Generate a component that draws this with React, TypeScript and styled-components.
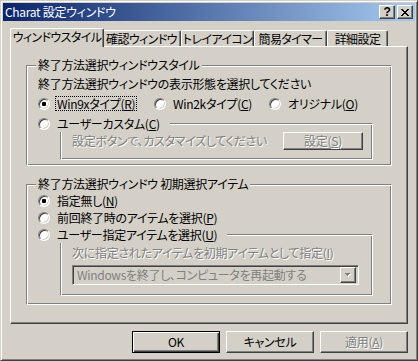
import styled, { createGlobalStyle } from "styled-components";

const face = "#d4d0c8";
const shadow = "#808080";
const dark = "#404040";

const GlobalStyle = createGlobalStyle`
  * { box-sizing: border-box; }
  html, body { margin: 0; padding: 0; background: ${face}; }
  body {
    font-family: "Noto Sans CJK JP", "Noto Sans", sans-serif;
    font-size: 12px;
    line-height: 14px;
    letter-spacing: -0.3px;
    font-feature-settings: "palt";
    color: #000;
  }
`;

const Window = styled.div`
  width: 418px;
  height: 361px;
  display: flex;
  flex-direction: column;
  padding: 2px;
  background: ${face};
  border: 1px solid;
  border-color: ${face} ${dark} ${dark} ${face};
  box-shadow: inset 1px 1px #fff, inset -1px -1px ${shadow};
`;

const TitleBar = styled.div`
  height: 18px;
  flex: none;
  display: flex;
  align-items: center;
  padding: 0 2px;
  background: linear-gradient(to right, #0a246a, #a6caf0);
  color: #fff;
`;

const TitleText = styled.span`
  flex: 1;
  white-space: nowrap;
`;

const CaptionButton = styled.span<{ $gap?: number }>`
  width: 16px;
  height: 14px;
  margin-left: ${(p) => p.$gap ?? 0}px;
  display: flex;
  align-items: center;
  justify-content: center;
  background: ${face};
  border: 1px solid;
  border-color: #fff ${dark} ${dark} #fff;
  box-shadow: inset -1px -1px ${shadow};
  color: #000;
  font-family: "Liberation Sans", sans-serif;
  font-weight: bold;
  font-size: 12px;
  line-height: 1;
`;

const Body = styled.div`
  flex: 1;
  display: flex;
  flex-direction: column;
  padding: 7px 7px 0 7px;
`;

const TabStrip = styled.div`
  display: flex;
  align-items: flex-end;
  height: 19px;
  margin-bottom: -1px;
  position: relative;
  z-index: 1;
`;

const Tab = styled.div<{ $w: number; $active?: boolean }>`
  width: ${(p) => p.$w}px;
  height: ${(p) => (p.$active ? 19 : 16)}px;
  margin-right: ${(p) => (p.$active ? -2 : 0)}px;
  margin-bottom: ${(p) => (p.$active ? 0 : 1)}px;
  padding-bottom: ${(p) => (p.$active ? 2 : 0)}px;
  position: relative;
  z-index: ${(p) => (p.$active ? 2 : 1)};
  display: flex;
  align-items: center;
  justify-content: center;
  white-space: nowrap;
  letter-spacing: -0.6px;
  background: ${face};
  border: 1px solid;
  border-bottom: none;
  border-color: #fff ${dark} ${face} #fff;
  border-radius: 2px 2px 0 0;
  box-shadow: inset -1px 0 ${shadow};
`;

const Panel = styled.div`
  height: 278px;
  flex: none;
  display: flex;
  flex-direction: column;
  padding: 11px 15px 0 15px;
  border: 1px solid;
  border-color: #fff ${dark} ${dark} #fff;
  box-shadow: inset -1px -1px ${shadow};
`;

const GroupBox = styled.fieldset<{
  $indent: number;
  $bottom: number;
  $mt?: number;
  $ml?: number;
  $mr?: number;
}>`
  margin: ${(p) => p.$mt ?? 0}px ${(p) => p.$mr ?? 0}px 0
    ${(p) => p.$ml ?? 0}px;
  min-width: 0;
  padding: 0 0 ${(p) => p.$bottom}px ${(p) => p.$indent}px;
  border: 1px solid;
  border-color: ${shadow} #fff #fff ${shadow};
  box-shadow: inset 1px 1px #fff, inset -1px -1px ${shadow};
  display: flex;
  flex-direction: column;
`;

const Caption = styled.legend<{ $shift: number; $h: number }>`
  margin-left: ${(p) => p.$shift}px;
  padding: 0 ${(p) => (p.$shift < -10 ? 8 : 2)}px 0 ${(p) => (p.$shift < -10 ? 0 : 2)}px;
  height: ${(p) => p.$h}px;
  line-height: ${(p) => p.$h}px;
  background: ${face};
  white-space: nowrap;
  display: flex;
  align-items: center;
`;

const Line = styled.div<{ $mt?: number; $h?: number; $disabled?: boolean }>`
  margin-top: ${(p) => p.$mt ?? 0}px;
  height: ${(p) => p.$h ?? 14}px;
  display: flex;
  align-items: center;
  white-space: nowrap;
  color: ${(p) => (p.$disabled ? shadow : "#000")};
  text-shadow: ${(p) => (p.$disabled ? "1px 1px 0 #fff" : "none")};
`;

const RadioGrid = styled.div<{ $mt?: number }>`
  margin-top: ${(p) => p.$mt ?? 0}px;
  display: grid;
  grid-template-columns: 116px 115px auto;
`;

const RadioItem = styled.label`
  display: flex;
  align-items: center;
  height: 17px;
  white-space: nowrap;
`;

const RadioMark = styled.span<{ $checked?: boolean }>`
  width: 12px;
  height: 12px;
  flex: none;
  border-radius: 50%;
  background: #fff;
  border: 1px solid;
  border-color: ${shadow} #fff #fff ${shadow};
  box-shadow: inset 1px 1px ${dark}, inset -1px -1px ${face};
  display: flex;
  align-items: center;
  justify-content: center;

  &::after {
    content: "";
    width: 4px;
    height: 4px;
    border-radius: 1px;
    background: #000;
    display: ${(p) => (p.$checked ? "block" : "none")};
  }
`;

const RadioLabel = styled.span<{ $focused?: boolean }>`
  margin-left: 5px;
  padding: 0 1px;
  line-height: 13px;
  border: 1px dotted ${(p) => (p.$focused ? "#000" : "transparent")};
`;

const SetupRow = styled.div`
  height: 18px;
  padding-right: 9px;
  display: flex;
  align-items: center;
  justify-content: space-between;
  white-space: nowrap;
  color: ${shadow};
  text-shadow: 1px 1px 0 #fff;
`;

const PushButton = styled.button<{ $w: number; $h: number; $default?: boolean }>`
  width: ${(p) => p.$w}px;
  height: ${(p) => p.$h}px;
  padding: 0;
  font: inherit;
  letter-spacing: inherit;
  font-feature-settings: "palt";
  color: ${(p) => (p.disabled ? shadow : "#000")};
  text-shadow: ${(p) => (p.disabled ? "1px 1px 0 #fff" : "none")};
  background: ${face};
  border: 1px solid;
  border-color: ${(p) =>
    p.$default ? "#000" : `#fff ${dark} ${dark} #fff`};
  box-shadow: ${(p) =>
    p.$default
      ? `inset 1px 1px #fff, inset -1px -1px ${dark}, inset -2px -2px ${shadow}`
      : `inset -1px -1px ${shadow}`};
`;

const Combo = styled.div`
  width: 287px;
  height: 20px;
  margin-top: 4px;
  display: flex;
  align-items: center;
  padding: 2px 2px 2px 4px;
  border: 1px solid;
  border-color: ${shadow} #fff #fff ${shadow};
  box-shadow: inset 1px 1px ${dark}, inset -1px -1px ${face};
  color: ${shadow};
`;

const ComboText = styled.span`
  flex: 1;
  white-space: nowrap;
`;

const DropButton = styled.span`
  width: 16px;
  height: 16px;
  flex: none;
  display: flex;
  align-items: center;
  justify-content: center;
  border: 1px solid;
  border-color: #fff ${dark} ${dark} #fff;
  box-shadow: inset -1px -1px ${shadow};
`;

const ButtonRow = styled.div`
  display: flex;
  justify-content: flex-end;
  gap: 6px;
  margin-top: 7px;
`;

const Radio = ({
  children,
  checked,
  focused,
}: {
  children: React.ReactNode;
  checked?: boolean;
  focused?: boolean;
}) => (
  <RadioItem>
    <RadioMark $checked={checked} />
    <RadioLabel $focused={focused}>{children}</RadioLabel>
  </RadioItem>
);

const CloseGlyph = () => (
  <svg width="8" height="7" viewBox="0 0 8 7" shapeRendering="crispEdges">
    <path
      fill="#000"
      d="M0 0h2v1H0zM6 0h2v1H6zM1 1h2v1H1zM5 1h2v1H5zM2 2h4v1H2zM3 3h2v1H3zM2 4h4v1H2zM1 5h2v1H1zM5 5h2v1H5zM0 6h2v1H0zM6 6h2v1H6z"
    />
  </svg>
);

const DropArrow = () => (
  <svg width="8" height="5" viewBox="0 0 8 5" shapeRendering="crispEdges">
    <path fill="#fff" d="M2 1h5v1H2zM3 2h3v1H3zM4 3h1v1H4z" />
    <path fill={shadow} d="M1 0h5v1H1zM2 1h3v1H2zM3 2h1v1H3z" />
  </svg>
);

const tabs = [
  { label: "ウィンドウスタイル", w: 94 },
  { label: "確認ウィンドウ", w: 79 },
  { label: "トレイアイコン", w: 73 },
  { label: "簡易タイマー", w: 73 },
  { label: "詳細設定", w: 61 },
];

export default function App() {
  return (
    <>
      <GlobalStyle />
      <Window>
        <TitleBar>
          <TitleText>Charat 設定ウィンドウ</TitleText>
          <CaptionButton>?</CaptionButton>
          <CaptionButton $gap={2}>
            <CloseGlyph />
          </CaptionButton>
        </TitleBar>
        <Body>
          <TabStrip>
            {tabs.map((t, i) => (
              <Tab key={t.label} $w={t.w} $active={i === 0}>
                {t.label}
              </Tab>
            ))}
          </TabStrip>
          <Panel>
            <GroupBox $indent={11} $bottom={5}>
              <Caption $shift={-2} $h={14}>
                終了方法選択ウィンドウスタイル
              </Caption>
              <Line $mt={5}>終了方法選択ウィンドウの表示形態を選択してください</Line>
              <RadioGrid $mt={4}>
                <Radio checked focused>
                  Win9xタイプ(<u>R</u>)
                </Radio>
                <Radio>
                  Win2kタイプ(<u>C</u>)
                </Radio>
                <Radio>
                  オリジナル(<u>O</u>)
                </Radio>
              </RadioGrid>
              <GroupBox $indent={11} $bottom={9} $mt={3} $ml={22} $mr={18}>
                <Caption $shift={-34} $h={17}>
                  <Radio>
                    ユーザーカスタム(<u>C</u>)
                  </Radio>
                </Caption>
                <SetupRow>
                  <span>設定ボタンで、カスタマイズしてください</span>
                  <PushButton $w={80} $h={18} disabled>
                    設定(<u>S</u>)
                  </PushButton>
                </SetupRow>
              </GroupBox>
            </GroupBox>

            <GroupBox $indent={11} $bottom={8} $mt={11}>
              <Caption $shift={-2} $h={14}>
                終了方法選択ウィンドウ 初期選択アイテム
              </Caption>
              <Line $mt={1} $h={17}>
                <Radio checked>
                  指定無し(<u>N</u>)
                </Radio>
              </Line>
              <Line $h={17}>
                <Radio>
                  前回終了時のアイテムを選択(<u>P</u>)
                </Radio>
              </Line>
              <GroupBox $indent={11} $bottom={10} $ml={22} $mr={18}>
                <Caption $shift={-34} $h={17}>
                  <Radio>
                    ユーザー指定アイテムを選択(<u>U</u>)
                  </Radio>
                </Caption>
                <Line $mt={2} $h={16} $disabled>
                  次に指定されたアイテムを初期アイテムとして指定(<u>I</u>)
                </Line>
                <Combo>
                  <ComboText>Windowsを終了し、コンピュータを再起動する</ComboText>
                  <DropButton>
                    <DropArrow />
                  </DropButton>
                </Combo>
              </GroupBox>
            </GroupBox>
          </Panel>
          <ButtonRow>
            <PushButton $w={88} $h={22} $default>
              OK
            </PushButton>
            <PushButton $w={88} $h={22}>
              キャンセル
            </PushButton>
            <PushButton $w={88} $h={22} disabled>
              適用(<u>A</u>)
            </PushButton>
          </ButtonRow>
        </Body>
      </Window>
    </>
  );
}
